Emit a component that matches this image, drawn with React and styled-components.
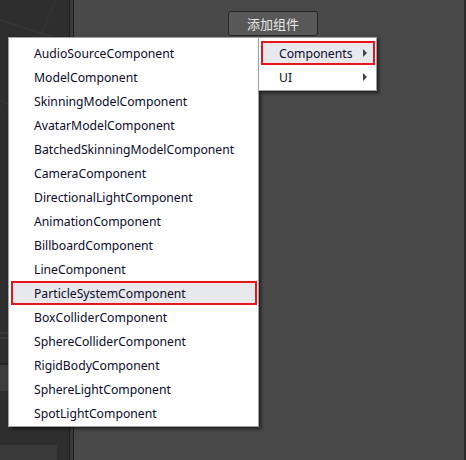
import React from "react";
import styled, { createGlobalStyle } from "styled-components";

const GlobalStyle = createGlobalStyle`
  html, body {
    margin: 0;
    padding: 0;
    background: #484848;
  }
  body {
    font-family: "Noto Sans", "Noto Sans CJK SC", sans-serif;
  }
`;

const Screen = styled.div`
  position: relative;
  display: flex;
  width: 466px;
  height: 460px;
  overflow: hidden;
`;

const SceneView = styled.div`
  position: relative;
  width: 69px;
  background: #2e2e2e;
  svg {
    display: block;
  }
`;

const Splitter = styled.div`
  width: 5px;
  background: #3a3a3a;
  border-left: 1px solid #1e1e1e;
  border-right: 1px solid #1e1e1e;
  box-sizing: border-box;
`;

const Inspector = styled.div`
  flex: 1;
  display: flex;
  justify-content: center;
  align-items: flex-start;
  padding: 11px 0 0 8px;
  background: #484848;
  border-right: 2px solid #2a2a2a;
`;

const AddButton = styled.button`
  width: 90px;
  height: 25px;
  background: #585858;
  border: 1px solid #262626;
  border-radius: 3px;
  color: #e8e8e8;
  font-family: "Noto Sans CJK SC", sans-serif;
  font-size: 13px;
  padding: 0;
  cursor: pointer;
`;

const Menu = styled.ul`
  position: absolute;
  top: ${(p) => p.$top}px;
  left: ${(p) => p.$left}px;
  width: ${(p) => p.$width}px;
  margin: 0;
  padding: 3px 0 1px;
  list-style: none;
  background: #ffffff;
  border: 1px solid #a0a0a0;
  box-sizing: border-box;
  box-shadow: 2px 2px 3px rgba(0, 0, 0, 0.55);
`;

const Item = styled.li`
  position: relative;
  display: flex;
  align-items: center;
  height: 24px;
  margin: 0 1px 0 2px;
  padding-left: ${(p) => p.$indent}px;
  box-sizing: border-box;
  font-size: 12.2px;
  color: #0a0a2a;
  white-space: nowrap;
  background: ${(p) => (p.$active ? "#e8e9ec" : "transparent")};
  outline: ${(p) => (p.$active ? "2px solid #e8141c" : "none")};
  outline-offset: -2px;
`;

const Arrow = styled.span`
  position: absolute;
  right: 8px;
  top: 8px;
  width: 0;
  height: 0;
  border-top: 4px solid transparent;
  border-bottom: 4px solid transparent;
  border-left: 4px solid #444;
`;

const components = [
  "AudioSourceComponent",
  "ModelComponent",
  "SkinningModelComponent",
  "AvatarModelComponent",
  "BatchedSkinningModelComponent",
  "CameraComponent",
  "DirectionalLightComponent",
  "AnimationComponent",
  "BillboardComponent",
  "LineComponent",
  "ParticleSystemComponent",
  "BoxColliderComponent",
  "SphereColliderComponent",
  "RigidBodyComponent",
  "SphereLightComponent",
  "SpotLightComponent",
];

const App = () => {
  return (
    <Screen>
      <GlobalStyle />
      <SceneView>
        <svg width="69" height="460">
          <line x1="0" y1="20" x2="69" y2="42" stroke="#3a3a3a" strokeWidth="1" />
          <line x1="56" y1="0" x2="30" y2="60" stroke="#363636" strokeWidth="1" />
          <line x1="0" y1="100" x2="8" y2="104" stroke="#3a3a3a" strokeWidth="1" />
          <line x1="0" y1="333" x2="8" y2="333" stroke="#474747" strokeWidth="1" />
          <line x1="0" y1="338" x2="8" y2="338" stroke="#474747" strokeWidth="1" />
          <line x1="0" y1="364" x2="8" y2="364" stroke="#1c1c1c" strokeWidth="1" />
          <rect x="0" y="365" width="8" height="26" fill="#3c3c3c" />
          <rect x="0" y="445" width="57" height="15" fill="#393939" />
        </svg>
      </SceneView>
      <Splitter />
      <Inspector>
        <AddButton>添加组件</AddButton>
      </Inspector>

      <Menu $top={37} $left={8} $width={251}>
        {components.map((name) => (
          <Item key={name} $indent={23} $active={name === "ParticleSystemComponent"}>
            {name}
          </Item>
        ))}
      </Menu>

      <Menu $top={37} $left={258} $width={119}>
        <Item $indent={18} $active>
          Components
          <Arrow />
        </Item>
        <Item $indent={18}>
          UI
          <Arrow />
        </Item>
      </Menu>
    </Screen>
  );
};

export default App;
